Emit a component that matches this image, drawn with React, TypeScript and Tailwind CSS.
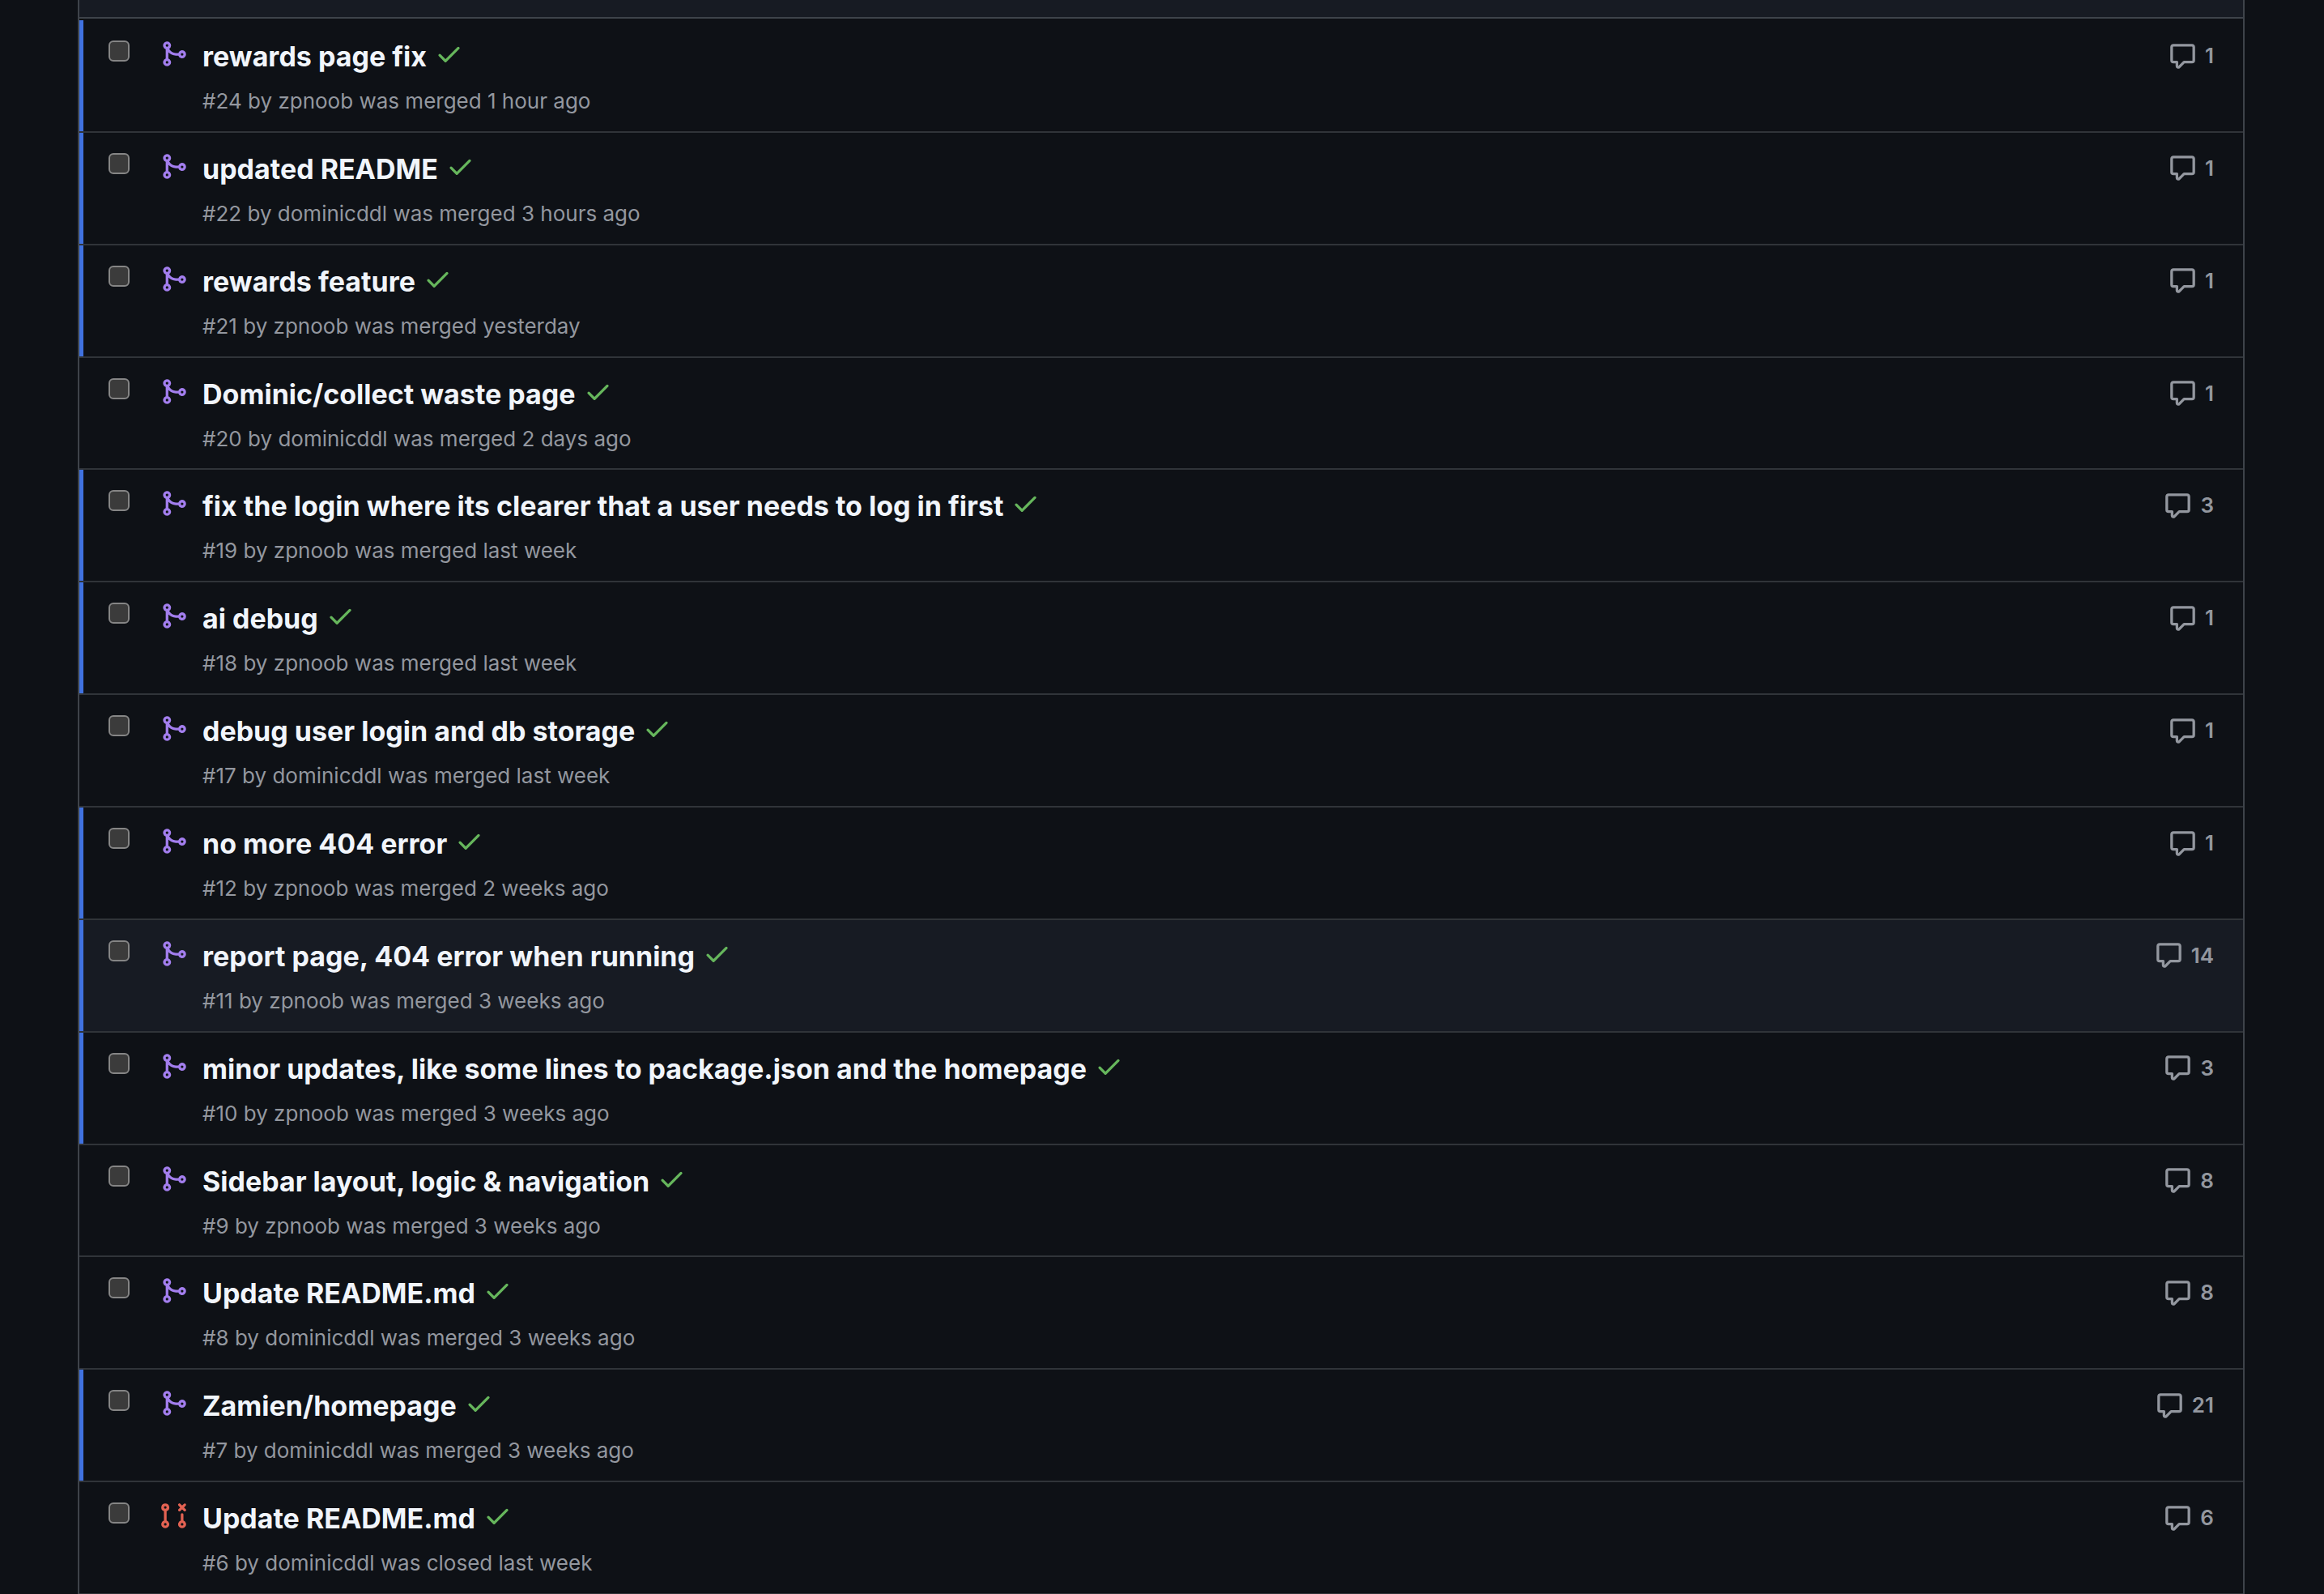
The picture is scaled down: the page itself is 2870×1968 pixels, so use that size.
type PullRequest = {
  id: number;
  title: string;
  author: string;
  status: string;
  comments: number;
  unread?: boolean;
  active?: boolean;
  closed?: boolean;
};

const pulls: PullRequest[] = [
  { id: 24, title: "rewards page fix", author: "zpnoob", status: "merged 1 hour ago", comments: 1, unread: true },
  { id: 22, title: "updated README", author: "dominicddl", status: "merged 3 hours ago", comments: 1, unread: true },
  { id: 21, title: "rewards feature", author: "zpnoob", status: "merged yesterday", comments: 1, unread: true },
  { id: 20, title: "Dominic/collect waste page", author: "dominicddl", status: "merged 2 days ago", comments: 1 },
  { id: 19, title: "fix the login where its clearer that a user needs to log in first", author: "zpnoob", status: "merged last week", comments: 3, unread: true },
  { id: 18, title: "ai debug", author: "zpnoob", status: "merged last week", comments: 1, unread: true },
  { id: 17, title: "debug user login and db storage", author: "dominicddl", status: "merged last week", comments: 1 },
  { id: 12, title: "no more 404 error", author: "zpnoob", status: "merged 2 weeks ago", comments: 1, unread: true },
  { id: 11, title: "report page, 404 error when running", author: "zpnoob", status: "merged 3 weeks ago", comments: 14, unread: true, active: true },
  { id: 10, title: "minor updates, like some lines to package.json and the homepage", author: "zpnoob", status: "merged 3 weeks ago", comments: 3, unread: true },
  { id: 9, title: "Sidebar layout, logic & navigation", author: "zpnoob", status: "merged 3 weeks ago", comments: 8 },
  { id: 8, title: "Update README.md", author: "dominicddl", status: "merged 3 weeks ago", comments: 8 },
  { id: 7, title: "Zamien/homepage", author: "dominicddl", status: "merged 3 weeks ago", comments: 21, unread: true },
  { id: 6, title: "Update README.md", author: "dominicddl", status: "closed last week", comments: 6, closed: true },
];

const paths = {
  merge:
    "M5.45 5.154A4.25 4.25 0 0 0 9.25 7.5h1.378a2.251 2.251 0 1 1 0 1.5H9.25A5.734 5.734 0 0 1 5 7.123v3.505a2.25 2.25 0 1 1-1.5 0V5.372a2.25 2.25 0 1 1 1.95-.218ZM4.25 13.5a.75.75 0 1 0 0-1.5.75.75 0 0 0 0 1.5Zm8.5-4.5a.75.75 0 1 0 0-1.5.75.75 0 0 0 0 1.5ZM5 3.25a.75.75 0 1 0 0 .005V3.25Z",
  closed:
    "M3.25 1A2.25 2.25 0 0 1 4 5.372v5.256a2.251 2.251 0 1 1-1.5 0V5.372A2.251 2.251 0 0 1 3.25 1Zm9.5 5.5a.75.75 0 0 1 .75.75v3.378a2.251 2.251 0 1 1-1.5 0V7.25a.75.75 0 0 1 .75-.75Zm-2.03-5.273a.75.75 0 0 1 1.06 0l.97.97.97-.97a.748.748 0 0 1 1.265.332.75.75 0 0 1-.205.729l-.97.97.97.97a.751.751 0 0 1-.018 1.042.751.751 0 0 1-1.042.018l-.97-.97-.97.97a.749.749 0 0 1-1.275-.326.749.749 0 0 1 .215-.734l.97-.97-.97-.97a.75.75 0 0 1 0-1.06ZM2.5 3.25a.75.75 0 1 0 1.5 0 .75.75 0 0 0-1.5 0ZM3.25 12a.75.75 0 1 0 0 1.5.75.75 0 0 0 0-1.5Zm9.5 0a.75.75 0 1 0 0 1.5.75.75 0 0 0 0-1.5Z",
  check:
    "M13.78 4.22a.75.75 0 0 1 0 1.06l-7.25 7.25a.75.75 0 0 1-1.06 0L2.22 9.28a.751.751 0 0 1 .018-1.042.751.751 0 0 1 1.042-.018L6 10.94l6.72-6.72a.75.75 0 0 1 1.06 0Z",
  comment:
    "M1 2.75C1 1.784 1.784 1 2.75 1h10.5c.966 0 1.75.784 1.75 1.75v7.5A1.75 1.75 0 0 1 13.25 12H9.06l-2.573 2.573A1.458 1.458 0 0 1 4 13.543V12H2.75A1.75 1.75 0 0 1 1 10.25Zm1.75-.25a.25.25 0 0 0-.25.25v7.5c0 .138.112.25.25.25h2a.75.75 0 0 1 .75.75v2.19l2.72-2.72a.749.749 0 0 1 .53-.22h4.5a.25.25 0 0 0 .25-.25v-7.5a.25.25 0 0 0-.25-.25Z",
};

function Icon({ name, className }: { name: keyof typeof paths; className: string }) {
  return (
    <svg viewBox="0 0 16 16" fill="currentColor" aria-hidden="true" className={`size-[35px] shrink-0 ${className}`}>
      <path d={paths[name]} />
    </svg>
  );
}

function Row({ pr, first }: { pr: PullRequest; first: boolean }) {
  return (
    <li
      className={`flex flex-1 items-start border-t-2 pr-9 ${first ? "border-t-[#0e1116]" : "border-t-[#303439]"} ${pr.active ? "bg-[#171b23]" : ""}`}
    >
      <div className={`w-[5px] self-stretch ${pr.unread ? "bg-[#4072e0]" : ""}`} />
      <input
        type="checkbox"
        aria-label={`Select ${pr.title}`}
        className="mt-[25px] ml-[31px] size-[26px] shrink-0 appearance-none rounded-[6px] border-2 border-[#858585] bg-[#3b3b3b]"
      />
      <Icon name={pr.closed ? "closed" : "merge"} className={`mt-6 ml-[37px] ${pr.closed ? "text-[#e36252]" : "text-[#a37eee]"}`} />
      <div className="ml-[18px] flex flex-1 flex-col pt-5">
        <div className="flex items-start gap-[10px]">
          <h3 className="text-[34px] leading-[50px] font-bold text-[#f1f5fb]">
            <a href={`#${pr.id}`}>{pr.title}</a>
          </h3>
          <button type="button" aria-label="Checks passed" className="pt-1 text-[#66b65c]">
            <Icon name="check" className="" />
          </button>
        </div>
        <p className="mt-[10px] text-[26px] leading-10 text-[#93979f]">
          #{pr.id} by <a href={`#${pr.author}`}>{pr.author}</a> was {pr.status}
        </p>
      </div>
      <a
        href={`#comments-${pr.id}`}
        aria-label={`${pr.comments} comments`}
        className="mt-[26px] flex items-center gap-[10px] text-[26px] leading-9 font-semibold text-[#93979f]"
      >
        <Icon name="comment" className="" />
        <span>{pr.comments}</span>
      </a>
    </li>
  );
}

export default function App() {
  return (
    <main className="flex min-h-screen flex-col bg-[#0e1116] pr-[98px] pl-24 font-['Inter',sans-serif]">
      <div className="flex flex-1 flex-col border-x-2 border-[#3e434a]">
        <div className="h-[23px] border-b-2 border-[#3e434a] bg-[#171b23]" />
        <ul className="flex flex-1 flex-col border-b border-[#303439]">
          {pulls.map((pr, i) => (
            <Row key={pr.id} pr={pr} first={i === 0} />
          ))}
        </ul>
      </div>
    </main>
  );
}
